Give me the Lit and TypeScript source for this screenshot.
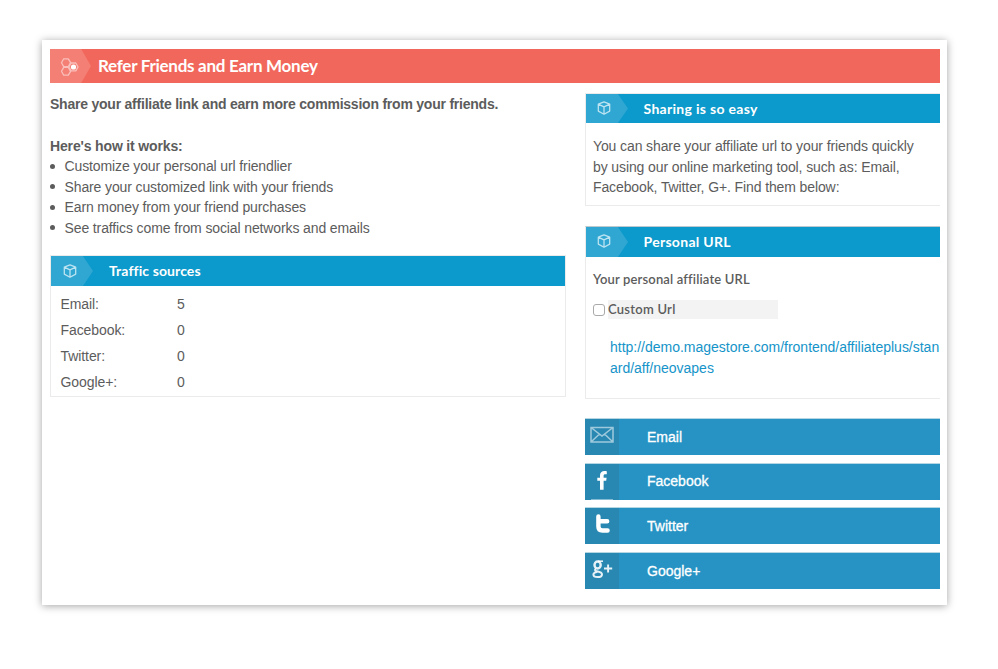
import { LitElement, html, svg, css } from "lit";
import { customElement, property } from "lit/decorators.js";

const hexIcon = html`<svg class="hex" viewBox="0 0 20 20" width="20" height="20" fill="none" stroke="#fff" stroke-opacity=".5" stroke-width="1.3">
  <path d="M3.700 1.800h4.600l2.300 3.900-2.300 3.900H3.700L1.500 5.700z M3.700 10.400h4.600l2.300 3.900-2.300 3.900H3.700l-2.200-3.900z M11.200 6h4.600l2.300 4-2.300 3.900h-4.600L8.900 10z" stroke-linejoin="round"/>
  <circle cx="13.500" cy="10" r="2.600" fill="#fff" stroke="none"/>
</svg>`;

const cubeIcon = html`<svg class="cube" viewBox="0 0 14 14" width="14" height="14" fill="none" stroke="#fff" stroke-opacity=".68" stroke-width="1.3" stroke-linejoin="round">
  <path d="M7 .9 12.700 3.200v6.900L7 13.200 1.300 10.100V3.200z M1.300 3.200 7 5.800l5.700-2.600 M7 5.800v7.400"/>
</svg>`;

const socialIcons: Record<string, unknown> = {
  Email: svg`<g fill="none" stroke="#fff" stroke-opacity=".55" stroke-width="1.5"><path d="M6 8.500h22v14.500H6z M6 8.500l11 8.500L28 8.500 M6 23l8.500-8 M28 23l-8.500-8"/></g>`,
  Facebook: svg`<path fill="#fff" d="M15 25.800V16.700h-2.700v-3H15v-2.200c0-3 1.700-4.500 4.500-4.500.9 0 1.900.1 2.300.2v3h-1.700c-1 0-1.500.5-1.500 1.500v2h3l-.4 3h-2.600v9.100z"/><path fill="#fff" fill-opacity=".55" d="M6 35.200h22v.8H6z"/>`,
  Twitter: svg`<path fill="none" stroke="#fff" stroke-width="4.400" stroke-linecap="round" stroke-linejoin="round" d="M13.400 8.500v10q0 4 4 4h5.200 M13.800 13.200h8.400"/>`,
  "Google+": svg`<g fill="none" stroke="#fff" stroke-opacity=".88"><ellipse cx="12.600" cy="12" rx="3.100" ry="3.500" stroke-width="2.400"/><path d="M13 8.200h5" stroke-width="1.600"/><path stroke-width="2" d="M11 15.500c-1.800 1.300-1 2.300.6 2.700 3 .6 5.400 1 5.400 3 0 2-2 2.900-4.400 2.900S8.400 23.300 8.400 21.600c0-1.700 1.700-2.500 4.100-2.900"/><path d="M19 15.500h8.200 M23.100 11.400v8.200" stroke-width="1.900"/></g>`,
};

@customElement("info-panel")
export class InfoPanel extends LitElement {
  @property() heading = "";

  static styles = css`
    :host { display: block; box-sizing: border-box; border: 1px solid #ebebeb; }
    :host([clipped]) { border-right: 0; }
    .bar { display: flex; align-items: center; height: 30px; background: #0c99cb; color: #fff; }
    :host([slim]) .bar { height: 29px; }
    .tag { box-sizing: border-box; width: 42px; height: 100%; padding: 8px 0 0 12px; background: #2fa7d2; clip-path: polygon(0 0, 76% 0, 100% 50%, 76% 100%, 0 100%); }
    :host([clipped]) .tag { padding: 7px 0 0 11px; }
    .cube { display: block; }
    .title { margin-left: 16px; font: 700 14px/30px Lato, sans-serif; letter-spacing: .1px; white-space: nowrap; }
    :host([clipped]) .title { margin-left: 15.500px; letter-spacing: .3px; }
  `;

  render() {
    return html`<div class="bar"><span class="tag">${cubeIcon}</span><span class="title">${this.heading}</span></div><slot></slot>`;
  }
}

@customElement("app-root")
export class AppRoot extends LitElement {
  static styles = css`
    :host { display: block; box-sizing: border-box; height: 669px; padding: 40px 51px 0 42px; background: #fff; overflow: hidden;
      font: 14px/20.5px "Liberation Sans", Arial, sans-serif; color: #5c5c5c; }
    .card { box-sizing: border-box; height: 565px; padding: 9px 7px 0 8px; background: #fff; box-shadow: 0 1px 8px rgba(0, 0, 0, .36); }
    .banner { display: flex; height: 34px; background: #f2675b; color: #fff; }
    .mark { box-sizing: border-box; width: 41px; padding: 8px 0 0 10px; background: #f47f75; clip-path: polygon(0 0, 76% 0, 100% 50%, 76% 100%, 0 100%); }
    .hex { display: block; }
    .headline { margin-left: 7px; font: 700 17px/34px Lato, sans-serif; letter-spacing: -.27px; white-space: nowrap; }
    .columns { display: flex; gap: 19px; }
    .main { width: 516px; padding-top: 11px; }
    .side { width: 355px; padding-top: 10px; }
    .lead, .how { font-weight: 700; white-space: nowrap; }
    .lead { letter-spacing: -.225px; margin-bottom: 21px; }
    .how { letter-spacing: -.15px; }
    .steps { margin: 0; padding: 0; list-style: none; }
    .step { display: flex; align-items: center; gap: 9.500px; white-space: nowrap; letter-spacing: -.12px; }
    .step::before { content: ""; width: 5px; height: 5px; border-radius: 50%; background: #5c5c5c; }
    .traffic { height: 142px; margin-top: 17px; }
    .rows { display: grid; grid-template-columns: 116.500px 1fr; grid-auto-rows: 26px; align-items: center; padding: 5px 0 0 9.500px; letter-spacing: -.08px; }
    .easy { height: 113px; }
    .note { padding: 13px 0 0 7px; white-space: nowrap; letter-spacing: -.11px; }
    .personal { height: 173px; margin-top: 20px; border-top-color: #bcc9ce; }
    .urlbox { padding: 12px 0 0 7px; }
    .label, .custom { font: 600 13px/20px Lato, sans-serif; white-space: nowrap; }
    .label { letter-spacing: .15px; }
    .check { display: flex; align-items: center; gap: 3px; margin-top: 11px; }
    .box { box-sizing: border-box; width: 12px; height: 12px; border: 1px solid #aaa; border-radius: 3px; background: #fff; }
    .custom { width: 170px; height: 19px; line-height: 19px; letter-spacing: .25px; background: #f3f3f3; }
    .link { display: block; margin: 18px 0 0 17px; color: #1594c9; text-decoration: none; white-space: nowrap; line-height: 21px; letter-spacing: -.01px; }
    .socials { display: grid; gap: 8.600px; margin-top: 20px; }
    .social { display: flex; align-items: center; height: 36px; background: #2693c4; box-shadow: 0 -1px #b5d6e3; color: #fff; }
    .badge { width: 34px; height: 36px; margin-right: 28px; background: #2888b2; }
    .name { -webkit-text-stroke: .3px #fff; white-space: nowrap; }
  `;

  private sources: [string, number][] = [["Email", 5], ["Facebook", 0], ["Twitter", 0], ["Google+", 0]];

  private steps = [
    "Customize your personal url friendlier",
    "Share your customized link with your friends",
    "Earn money from your friend purchases",
    "See traffics come from social networks and emails",
  ];

  render() {
    return html`<div class="card">
      <div class="banner"><span class="mark">${hexIcon}</span><span class="headline">Refer Friends and Earn Money</span></div>
      <div class="columns">
        <div class="main">
          <div class="lead">Share your affiliate link and earn more commission from your friends.</div>
          <div class="how">Here's how it works:</div>
          <ul class="steps">${this.steps.map((s) => html`<li class="step">${s}</li>`)}</ul>
          <info-panel class="traffic" heading="Traffic sources">
            <div class="rows">${this.sources.map(([n, v]) => html`<span>${n}:</span><span>${v}</span>`)}</div>
          </info-panel>
        </div>
        <div class="side">
          <info-panel class="easy" clipped slim heading="Sharing is so easy">
            <div class="note">You can share your affiliate url to your friends quickly<br>by using our online marketing tool, such as: Email,<br>Facebook, Twitter, G+. Find them below:</div>
          </info-panel>
          <info-panel class="personal" clipped heading="Personal URL">
            <div class="urlbox">
              <div class="label">Your personal affiliate URL</div>
              <div class="check"><span class="box"></span><span class="custom">Custom Url</span></div>
              <a class="link">http://demo.magestore.com/frontend/affiliateplus/stan<br>ard/aff/neovapes</a>
            </div>
          </info-panel>
          <div class="socials">${this.sources.map(([n]) => html`<div class="social"><svg class="badge" viewBox="0 0 34 36">${socialIcons[n]}</svg><span class="name">${n}</span></div>`)}</div>
        </div>
      </div>
    </div>`;
  }
}
